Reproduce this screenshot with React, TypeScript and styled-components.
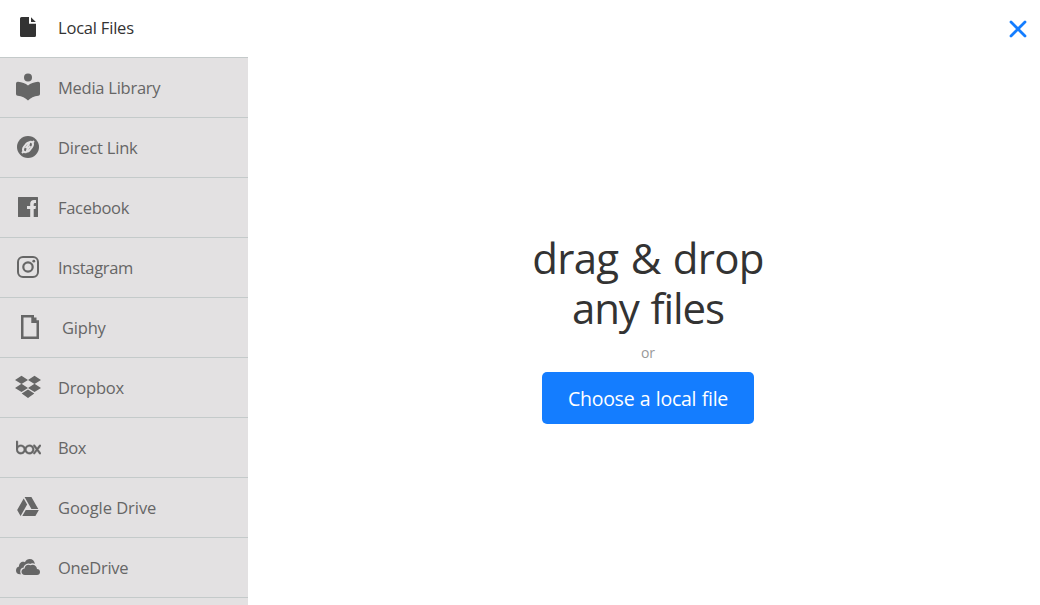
import type { ReactNode } from "react";
import styled, { createGlobalStyle } from "styled-components";
import { SiBox } from "react-icons/si";

interface Source {
  label: string;
  icon: ReactNode;
  spacing: number;
  indent?: number;
}

const GlobalStyle = createGlobalStyle`
  * {
    box-sizing: border-box;
  }
  body {
    margin: 0;
    overflow: hidden;
    font-family: "Open Sans", "Noto Sans", sans-serif;
  }
`;

const Picker = styled.div`
  display: flex;
  height: 100vh;
  overflow: hidden;
  background: #fff;
`;

const Sidebar = styled.nav`
  display: flex;
  flex-direction: column;
  flex: 0 0 248px;
  background: #e3e1e2;
`;

const SourceRow = styled.div<{ $active?: boolean }>`
  display: flex;
  align-items: center;
  flex: none;
  height: ${(p) => (p.$active ? 58 : 60)}px;
  padding: ${(p) => (p.$active ? "0 0 3px 13px" : "0 0 1px 13px")};
  border-bottom: 1px solid #c4caca;
  background: ${(p) => (p.$active ? "#fff" : "#e3e1e2")};
  color: ${(p) => (p.$active ? "#333" : "#666")};
  cursor: pointer;
`;

const IconSlot = styled.span`
  display: flex;
  align-items: center;
  justify-content: center;
  width: 30px;
  height: 30px;
`;

const Label = styled.span<{ $spacing: number; $indent?: number }>`
  margin-left: ${(p) => 15 + (p.$indent ?? 0)}px;
  padding-top: 2px;
  font-size: 16.5px;
  line-height: 24px;
  letter-spacing: ${(p) => p.$spacing}px;
  white-space: nowrap;
`;

const BoxLogo = styled(SiBox)`
  stroke: currentColor;
  stroke-width: 0.3px;
`;

const Main = styled.main`
  display: flex;
  flex-direction: column;
  flex: 1;
`;

const Header = styled.header`
  display: flex;
  justify-content: flex-end;
  height: 58px;
  padding: 19px 12px 0 0;
`;

const CloseButton = styled.button`
  width: 20px;
  height: 20px;
  padding: 0;
  border: 0;
  background: none;
  color: #147dff;
`;

const DropArea = styled.section`
  display: flex;
  flex-direction: column;
  align-items: center;
  padding: 175px 0 0 8px;
`;

const Title = styled.h1`
  display: flex;
  flex-direction: column;
  margin: 0;
  color: #333;
  font-size: 42px;
  font-weight: 400;
  line-height: 50px;
  text-align: center;
`;

const TitleLine = styled.span<{ $spacing: number }>`
  letter-spacing: ${(p) => p.$spacing}px;
  word-spacing: 2px;
`;

const Or = styled.div`
  margin-top: 10px;
  color: #999;
  font-size: 14px;
  line-height: 20px;
`;

const ChooseButton = styled.button`
  width: 212px;
  height: 52px;
  margin-top: 9px;
  padding: 1px 0 0;
  border: 0;
  border-radius: 5px;
  background: #147dff;
  color: #fff;
  font-family: inherit;
  font-size: 19.5px;
  letter-spacing: -0.25px;
  word-spacing: 0.6px;
`;

const Svg = ({ children }: { children: ReactNode }) => (
  <svg width="30" height="30" viewBox="0 0 30 30" fill="currentColor">
    {children}
  </svg>
);

const FileIcon = (
  <Svg>
    <path d="M8.5 5H16V11.7H23V23.5Q23 25 21.5 25H8.5Q7 25 7 23.5V6.5Q7 5 8.5 5Z" />
    <path d="M18 5.2L22.8 10H18Z" />
  </Svg>
);

const LibraryIcon = (
  <Svg>
    <circle cx="15" cy="5.6" r="4" />
    <path d="M15 13.6C12.5 11.2 9 10 5 9.7Q3 9.6 3 11.5V22Q3 23.6 4.7 23.8C9 24.3 12.4 26 15 28.6C17.6 26 21 24.3 25.3 23.8Q27 23.6 27 22V11.5Q27 9.6 25 9.7C21 10 17.5 11.2 15 13.6Z" />
  </Svg>
);

const LinkIcon = (
  <Svg>
    <circle cx="15" cy="15" r="11" />
    <g fill="none" stroke="#e3e1e2" strokeWidth="2" strokeLinejoin="round">
      <path d="M13.4 20C12.2 20.5 11.2 20.2 10.6 19.4C9.6 18 10 16.2 11.2 14.6L13.2 12C14.2 10.8 15.2 10.4 16.4 10.2L15.6 12.6L12.8 16.2" />
      <path d="M16.6 10C17.8 9.5 18.8 9.8 19.4 10.6C20.4 12 20 13.8 18.8 15.4L16.8 18C15.8 19.2 14.8 19.6 13.6 19.8L14.4 17.4L17.2 13.8" />
      <path d="M9 21L11 19M19 11L21 9" />
    </g>
    <path d="M12.6 15.6H17.4" stroke="#e3e1e2" strokeWidth="1" />
  </Svg>
);

const FacebookIcon = (
  <Svg>
    <path d="M5.5 5H24.5Q25 5 25 5.5V24.5Q25 25 24.5 25H20.7V17H22.5L23 13.9H20.7V12.2Q20.7 10.9 22 10.9H23V7.9H21Q17.2 7.9 17.2 11.7V13.9H14V17H17.2V25H5.5Q5 25 5 24.5V5.5Q5 5 5.5 5Z" />
  </Svg>
);

const InstagramIcon = (
  <Svg>
    <g fill="none" stroke="currentColor" strokeWidth="2">
      <rect x="5" y="5" width="20" height="20" rx="5" />
      <circle cx="15" cy="15" r="4.7" strokeWidth="2.2" />
    </g>
    <circle cx="20.8" cy="9.2" r="1.4" />
  </Svg>
);

const GiphyIcon = (
  <Svg>
    <path
      fillRule="evenodd"
      d="M8 3H21V5.5H23.5V8.3H26V27H8ZM10.5 5.5V24.5H23.5V11H18.3V5.5Z"
    />
  </Svg>
);

const DropboxIcon = (
  <Svg>
    <path d="M8.5 3.8L15 7.9L8.5 12L2 7.9ZM21.5 3.8L28 7.9L21.5 12L15 7.9ZM8.5 11.8L15 15.9L8.5 20L2 15.9ZM21.5 11.8L28 15.9L21.5 20L15 15.9ZM15 17.6L21.3 21.6L15 26L8.7 21.6Z" />
  </Svg>
);

const DriveIcon = (
  <Svg>
    <path
      transform="translate(3 3)"
      d="M7.71 3.5L1.15 15L4.58 21L11.13 9.5ZM9.73 15L6.3 21H19.42L22.85 15ZM22.28 14L15.42 2H8.58L15.43 14Z"
    />
  </Svg>
);

const OneDriveIcon = (
  <Svg>
    <path d="M8.5 22.2H7C4.4 22.2 3 20.4 3 18.4C3 16.4 4.3 14.9 6 14.6C5.8 11.3 9 8.9 11.9 10.2C13 8 14.7 7 16.7 7C19.6 7 21.4 8.8 21.8 11.5V16H10Z" />
    <path
      d="M12 23C9.8 23 8.5 21.5 8.5 19.8C8.5 18 9.9 16.7 11.6 16.6C11.7 13.7 14.8 11.7 17.4 13.3C20 11.6 23.8 13.4 24 17C25.8 17 27 18.3 27 20C27 21.7 25.8 23 24 23Z"
      stroke="#e3e1e2"
      strokeWidth="2.6"
      paintOrder="stroke"
    />
  </Svg>
);

const sources: Source[] = [
  { label: "Local Files", icon: FileIcon, spacing: -0.2 },
  { label: "Media Library", icon: LibraryIcon, spacing: -0.25 },
  { label: "Direct Link", icon: LinkIcon, spacing: -0.2 },
  { label: "Facebook", icon: FacebookIcon, spacing: -0.3 },
  { label: "Instagram", icon: InstagramIcon, spacing: -0.3 },
  { label: "Giphy", icon: GiphyIcon, spacing: -0.2, indent: 4 },
  { label: "Dropbox", icon: DropboxIcon, spacing: -0.2 },
  { label: "Box", icon: <BoxLogo size={25} />, spacing: -0.4 },
  { label: "Google Drive", icon: DriveIcon, spacing: -0.05 },
  { label: "OneDrive", icon: OneDriveIcon, spacing: -0.3 },
];

export default function App() {
  return (
    <>
      <GlobalStyle />
      <Picker>
        <Sidebar>
          {sources.map((source, i) => (
            <SourceRow key={source.label} $active={i === 0}>
              <IconSlot>{source.icon}</IconSlot>
              <Label $spacing={source.spacing} $indent={source.indent}>
                {source.label}
              </Label>
            </SourceRow>
          ))}
        </Sidebar>
        <Main>
          <Header>
            <CloseButton aria-label="Close">
              <svg width="20" height="20" viewBox="0 0 20 20">
                <path
                  d="M3 3L17 17M17 3L3 17"
                  stroke="currentColor"
                  strokeWidth="2.8"
                  strokeLinecap="round"
                />
              </svg>
            </CloseButton>
          </Header>
          <DropArea>
            <Title>
              <TitleLine $spacing={-0.7}>drag &amp; drop</TitleLine>
              <TitleLine $spacing={-1.1}>any files</TitleLine>
            </Title>
            <Or>or</Or>
            <ChooseButton>Choose a local file</ChooseButton>
          </DropArea>
        </Main>
      </Picker>
    </>
  );
}
